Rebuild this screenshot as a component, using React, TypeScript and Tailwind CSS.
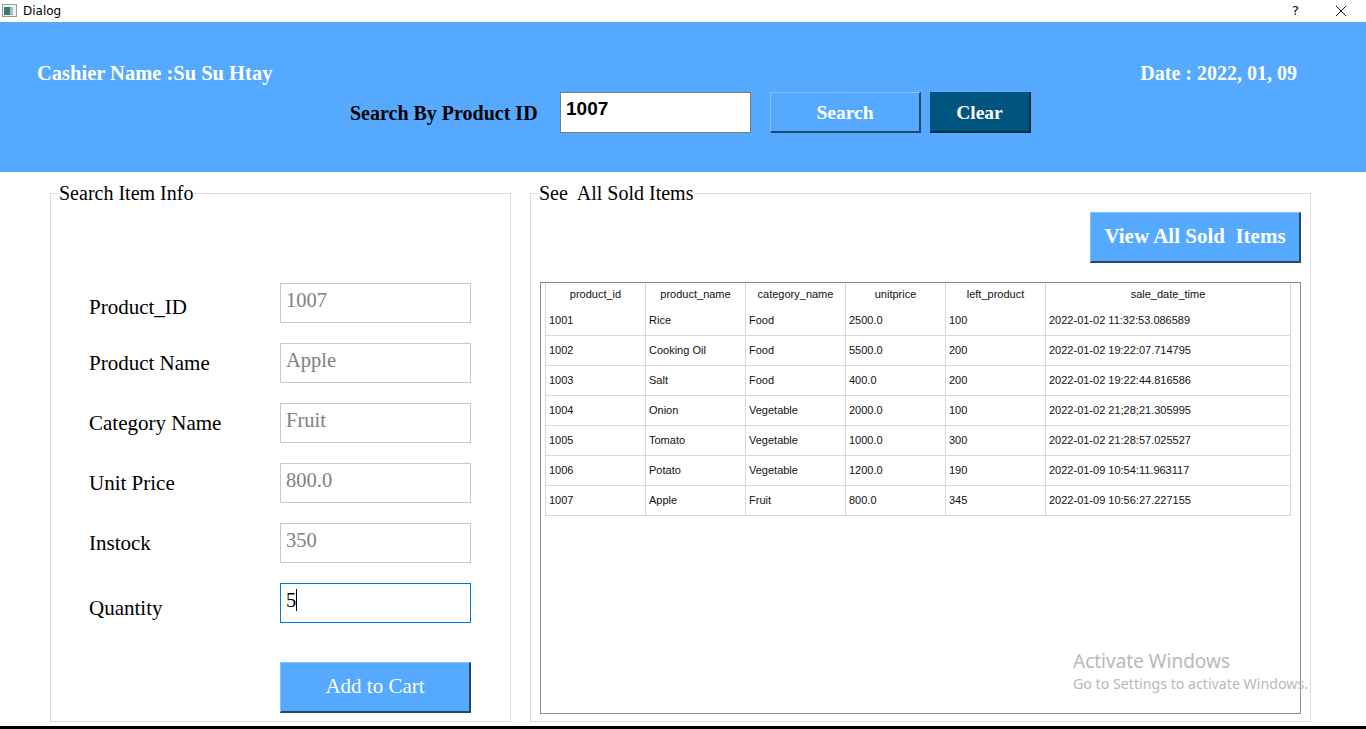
import { type ReactNode } from "react";

const SERIF = "font-['Liberation_Serif','Times_New_Roman',serif]";
const TABLE_FONT = "font-['Liberation_Sans',Arial,sans-serif]";

const ITEM_FIELDS = [
  { label: "Product_ID", value: "1007", offset: "pt-[8px]" },
  { label: "Product Name", value: "Apple", offset: "pt-[0px]" },
  { label: "Category Name", value: "Fruit", offset: "pt-[0px]" },
  { label: "Unit Price", value: "800.0", offset: "pt-[0px]" },
  { label: "Instock", value: "350", offset: "pt-[0px]" },
];

const COLUMNS = ["product_id", "product_name", "category_name", "unitprice", "left_product", "sale_date_time"];

const SOLD_ITEMS = [
  ["1001", "Rice", "Food", "2500.0", "100", "2022-01-02 11:32:53.086589"],
  ["1002", "Cooking Oil", "Food", "5500.0", "200", "2022-01-02 19:22:07.714795"],
  ["1003", "Salt", "Food", "400.0", "200", "2022-01-02 19:22:44.816586"],
  ["1004", "Onion", "Vegetable", "2000.0", "100", "2022-01-02 21;28;21.305995"],
  ["1005", "Tomato", "Vegetable", "1000.0", "300", "2022-01-02 21:28:57.025527"],
  ["1006", "Potato", "Vegetable", "1200.0", "190", "2022-01-09 10:54:11.963117"],
  ["1007", "Apple", "Fruit", "800.0", "345", "2022-01-09 10:56:27.227155"],
];

function GroupBox({ title, className, children }: { title: string; className: string; children: ReactNode }) {
  return (
    <fieldset className={`border border-[#dcdcdc] mt-[10px] h-[540px] flex flex-col ${className}`}>
      <legend className={`ml-[7px] px-[1px] text-[20px] leading-[22px] text-black whitespace-pre ${SERIF}`}>{title}</legend>
      {children}
    </fieldset>
  );
}

function TitleBar() {
  return (
    <div className="h-[22px] bg-white flex items-center">
      <svg width="16" height="14" viewBox="0 0 16 14" className="ml-[2px]">
        <rect x="0.5" y="0.5" width="14" height="12" fill="#f2f2f2" stroke="#9a9a9a" />
        <rect x="2" y="3" width="6" height="8" fill="#3b7a6a" />
        <rect x="8" y="3" width="3" height="8" fill="#9fc3d8" />
      </svg>
      <span className="ml-[5px] text-[12px] text-black font-['DejaVu_Sans',sans-serif]">Dialog</span>
      <span className="ml-auto mr-[36px] text-[13px] text-black font-['DejaVu_Sans',sans-serif]">?</span>
      <svg width="12" height="12" viewBox="0 0 12 12" className="mr-[19px]">
        <path d="M1 1 L11 11 M11 1 L1 11" stroke="#111" strokeWidth="1" />
      </svg>
    </div>
  );
}

function Header() {
  return (
    <header className={`h-[150px] bg-[#55aaff] pt-[39px] ${SERIF} font-bold`}>
      <div className="flex justify-between pl-[37px] pr-[69px] text-white leading-[24px]">
        <p className="text-[20.5px]">Cashier Name :Su Su Htay</p>
        <p className="text-[20px]">Date : 2022, 01, 09</p>
      </div>
      <div className="flex items-center mt-[7px] pl-[350px]">
        <span className="w-[210px] pt-[1px] text-[20px] text-black">Search By Product ID</span>
        <div className="w-[191px] h-[41px] bg-white border border-[#7a7a7a] px-[5px] flex items-start pt-[5px]">
          <span className="text-[19px] leading-[22px] text-black font-['Liberation_Sans',Arial,sans-serif] font-bold">1007</span>
        </div>
        <button className="ml-[19px] w-[151px] h-[41px] pt-[2px] bg-[#55aaff] border-t border-l border-[#85c2ff] border-b-2 border-r-2 border-b-[#27486b] border-r-[#27486b] text-white text-[19.5px]">
          Search
        </button>
        <button className="ml-[9px] w-[101px] h-[41px] pt-[2px] bg-[#005580] border-b-2 border-r-2 border-[#002a40] text-white text-[19.5px]">
          Clear
        </button>
      </div>
    </header>
  );
}

function ItemInfo() {
  return (
    <GroupBox title="Search Item Info" className="w-[461px]">
      <div className={`pt-[79px] pl-[38px] flex flex-col gap-[20px] ${SERIF}`}>
        {ITEM_FIELDS.map((f) => (
          <div key={f.label} className="flex items-center">
            <span className={`w-[191px] text-[21px] leading-[24px] text-black ${f.offset}`}>{f.label}</span>
            <div className="w-[191px] h-[40px] border border-[#c8c8c8] px-[5px] pt-[5px] text-[20.5px] leading-[22px] text-[#808080]">
              {f.value}
            </div>
          </div>
        ))}
        <div className="flex items-center">
          <span className="w-[191px] pt-[10px] text-[21px] leading-[24px] text-black">Quantity</span>
          <div className="w-[191px] h-[40px] border border-[#0078d7] px-[5px] pt-[5px] text-[20.5px] leading-[22px] text-black flex items-start">
            <span>5</span>
            <span className="w-[1px] h-[22px] bg-black" />
          </div>
        </div>
        <button className="ml-[191px] mt-[19px] w-[191px] h-[51px] bg-[#55aaff] border-t border-l border-[#85c2ff] border-b-2 border-r-2 border-b-[#27486b] border-r-[#27486b] text-white text-[21px]">
          Add to Cart
        </button>
      </div>
    </GroupBox>
  );
}

function SoldItems() {
  return (
    <GroupBox title="See  All Sold Items" className="w-[781px]">
      <div className="flex flex-col flex-1 pl-[9px] pr-[9px] pb-[7px]">
        <button className={`self-end mt-[8px] w-[211px] h-[51px] bg-[#55aaff] border-t border-l border-[#85c2ff] border-b-2 border-r-2 border-b-[#27486b] border-r-[#27486b] text-white text-[21px] font-bold whitespace-pre ${SERIF}`}>
          {"View All Sold  Items"}
        </button>
        <div className={`mt-[19px] flex-1 border border-[#888c94] pl-[4px] ${TABLE_FONT} text-[11px] text-[#111]`}>
          <div className="grid grid-cols-[100px_100px_100px_100px_100px_245px] border-l border-[#d8d8d8] w-[746px]">
            {COLUMNS.map((c) => (
              <div key={c} className="h-[23px] flex items-center justify-center border-r border-[#d8d8d8]">
                {c}
              </div>
            ))}
            {SOLD_ITEMS.map((row) =>
              row.map((cell, i) => (
                <div key={row[0] + i} className="h-[30px] flex items-center pl-[3px] border-r border-b border-[#d8d8d8]">
                  {cell}
                </div>
              ))
            )}
          </div>
        </div>
      </div>
    </GroupBox>
  );
}

export default function App() {
  return (
    <div className="relative w-[1366px] h-[729px] bg-white overflow-hidden">
      <TitleBar />
      <Header />
      <main className="h-[554px] flex gap-[19px] pl-[50px]">
        <ItemInfo />
        <SoldItems />
      </main>
      <div className="h-[3px] bg-black" />
      {/* Windows activation watermark */}
      <div className="absolute left-[1073px] top-[649px] text-[#b9b9b9] font-['Noto_Sans',sans-serif] pointer-events-none">
        <p className="text-[19px] leading-[25px]">Activate Windows</p>
        <p className="text-[14.2px] leading-[20px]">Go to Settings to activate Windows.</p>
      </div>
    </div>
  );
}
